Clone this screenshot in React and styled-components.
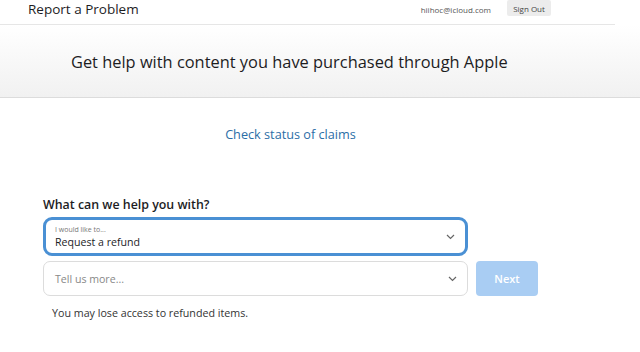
import styled, { createGlobalStyle } from "styled-components";

const Global = createGlobalStyle`
  html, body { margin: 0; padding: 0; background: #fff; }
  body { font-family: "Open Sans", "Noto Sans", sans-serif; color: #1d1d1f; }
`;

const Header = styled.header`
  width: 615px;
  height: 25px;
  border-bottom: 1px solid #e6e6e6;
  display: flex;
  align-items: center;
  padding-left: 28px;
  box-sizing: border-box;
`;

const Brand = styled.div`
  font-size: 13.5px;
  font-weight: 500;
  flex: 1;
  margin-top: -6px;
`;

const Email = styled.span`
  font-size: 8px;
  color: #555;
  margin-right: 16px;
  margin-top: -6px;
`;

const SignOut = styled.button`
  font-family: inherit;
  font-size: 8px;
  color: #444;
  background: #ececec;
  border: none;
  border-radius: 2px;
  height: 16px;
  width: 44px;
  padding: 0;
  margin-right: 64px;
  margin-top: -8px;
`;

const Banner = styled.section`
  height: 72px;
  background: linear-gradient(#ffffff, #f1f1f1);
  border-bottom: 1px solid #dcdcdc;
  display: flex;
  align-items: center;
  padding-left: 71px;
`;

const Title = styled.h1`
  margin: 0;
  font-size: 16.4px;
  font-weight: 500;
  color: #1d1d1f;
`;

const Main = styled.main`
  width: 495px;
  margin-left: 43px;
  display: flex;
  flex-direction: column;
`;

const ClaimsLink = styled.a`
  align-self: center;
  margin-top: 27px;
  font-size: 12.7px;
  color: #2b6ea6;
  text-decoration: none;
`;

const Question = styled.h2`
  margin: 53px 0 4px;
  font-size: 12.4px;
  font-weight: 600;
`;

const Row = styled.div`
  display: flex;
  gap: 8px;
  margin-bottom: 5px;
`;

const Select = styled.div`
  width: 425px;
  height: ${(p) => (p.active ? "39px" : "35px")};
  box-sizing: border-box;
  border: ${(p) => (p.active ? "3px solid #4a90d4" : "1px solid #dcdcdc")};
  border-radius: ${(p) => (p.active ? "9px" : "7px")};
  display: flex;
  align-items: center;
  padding: 0 10px 0 ${(p) => (p.active ? "9px" : "11px")};
  background: #fff;
`;

const SelectText = styled.div`
  flex: 1;
  display: flex;
  flex-direction: column;
`;

const Small = styled.span`
  font-size: 7px;
  color: #777;
  line-height: 10px;
`;

const Value = styled.span`
  font-size: 10.6px;
  line-height: 14px;
  color: ${(p) => (p.placeholder ? "#888" : "#1d1d1f")};
`;

const Chevron = () => (
  <svg width="9" height="6" viewBox="0 0 9 6">
    <path d="M1 1l3.5 3.5L8 1" fill="none" stroke="#666" strokeWidth="1.2" />
  </svg>
);

const NextButton = styled.button`
  width: 62px;
  height: 35px;
  border: none;
  border-radius: 4px;
  background: #a9cdf3;
  color: #fff;
  font-family: inherit;
  font-size: 11px;
  font-weight: 600;
`;

const Note = styled.p`
  margin: 5px 0 0 9px;
  font-size: 10.7px;
  color: #333;
`;

export default function App() {
  return (
    <>
      <Global />
      <Header>
        <Brand>Report a Problem</Brand>
        <Email>hiihoc@icloud.com</Email>
        <SignOut>Sign Out</SignOut>
      </Header>
      <Banner>
        <Title>Get help with content you have purchased through Apple</Title>
      </Banner>
      <Main>
        <ClaimsLink href="#">Check status of claims</ClaimsLink>
        <Question>What can we help you with?</Question>
        <Row>
          <Select active>
            <SelectText>
              <Small>I would like to...</Small>
              <Value>Request a refund</Value>
            </SelectText>
            <Chevron />
          </Select>
        </Row>
        <Row>
          <Select>
            <SelectText>
              <Value placeholder>Tell us more...</Value>
            </SelectText>
            <Chevron />
          </Select>
          <NextButton>Next</NextButton>
        </Row>
        <Note>You may lose access to refunded items.</Note>
      </Main>
    </>
  );
}
